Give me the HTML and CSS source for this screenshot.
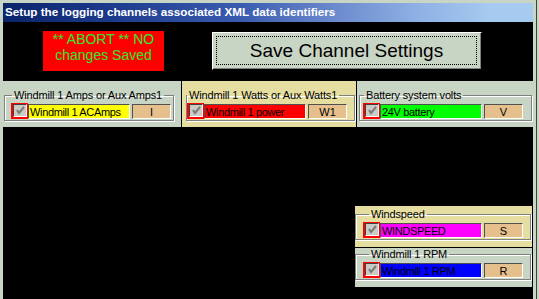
FILE: index.html
```html
<!DOCTYPE html>
<html>

<head>
<link rel="stylesheet" href="styles.css">
</head>

<body>
    <div class="frame">
        <div class="titlebar">Setup the logging channels associated XML data identifiers</div>
        <div class="client">
            <div class="top-row">
                <div class="abort">** ABORT ** NO<br>changes Saved</div>
                <div class="save-btn"><span class="focus">Save Channel Settings</span></div>
            </div>

            <div class="panel-row">
                <div class="panel p1">
                    <fieldset class="group">
                        <legend>Windmill 1 Amps or Aux Amps1</legend>
                        <div class="channel">
                            <div class="check-wrap"><div class="check"><svg width="11" height="11" viewBox="0 0 11 11"><polyline points="2,5 4,8 9,2" fill="none" stroke="#7a7a7a" stroke-width="2"/></svg></div></div>
                            <div class="name yellow">Windmill 1 ACAmps</div>
                            <div class="ident">I</div>
                        </div>
                    </fieldset>
                </div>
                <div class="panel p2 khaki">
                    <fieldset class="group">
                        <legend>Windmill 1 Watts or Aux Watts1</legend>
                        <div class="channel">
                            <div class="check-wrap"><div class="check"><svg width="11" height="11" viewBox="0 0 11 11"><polyline points="2,5 4,8 9,2" fill="none" stroke="#7a7a7a" stroke-width="2"/></svg></div></div>
                            <div class="name red">Windmill 1 power</div>
                            <div class="ident">W1</div>
                        </div>
                    </fieldset>
                </div>
                <div class="panel p3">
                    <fieldset class="group">
                        <legend>Battery system volts</legend>
                        <div class="channel">
                            <div class="check-wrap"><div class="check"><svg width="11" height="11" viewBox="0 0 11 11"><polyline points="2,5 4,8 9,2" fill="none" stroke="#7a7a7a" stroke-width="2"/></svg></div></div>
                            <div class="name green">24V battery</div>
                            <div class="ident">V</div>
                        </div>
                    </fieldset>
                </div>
            </div>

            <div class="side-stack">
                <div class="panel small khaki">
                    <fieldset class="group">
                        <legend>Windspeed</legend>
                        <div class="channel">
                            <div class="check-wrap"><div class="check"><svg width="11" height="11" viewBox="0 0 11 11"><polyline points="2,5 4,8 9,2" fill="none" stroke="#7a7a7a" stroke-width="2"/></svg></div></div>
                            <div class="name magenta">WINDSPEED</div>
                            <div class="ident">S</div>
                        </div>
                    </fieldset>
                </div>
                <div class="panel small">
                    <fieldset class="group">
                        <legend>Windmill 1 RPM</legend>
                        <div class="channel">
                            <div class="check-wrap"><div class="check"><svg width="11" height="11" viewBox="0 0 11 11"><polyline points="2,5 4,8 9,2" fill="none" stroke="#7a7a7a" stroke-width="2"/></svg></div></div>
                            <div class="name blue">Windmill 1 RPM</div>
                            <div class="ident">R</div>
                        </div>
                    </fieldset>
                </div>
            </div>
        </div>
    </div>
</body>

</html>
```

FILE: styles.css
```css
body {
    margin: 0;
    background-color: #c8d4c4;
    font-family: "Liberation Sans", Arial, sans-serif;
    font-size: 11px;
    color: #000;
}

.frame {
    width: 533px;
    height: 299px;
    padding: 3px 0 0 3px;
    box-sizing: border-box;
    box-shadow: 3px 0 0 #c8d4c4, 4px 0 0 #3c463c;
    overflow: hidden;
}

.titlebar {
    height: 19px;
    line-height: 18px;
    padding-left: 2px;
    color: #fff;
    font-weight: bold;
    font-size: 11.7px;
    white-space: nowrap;
    background: linear-gradient(to right, #0a246a 0%, #1c3a8c 20%, #3a5cb0 45%, #6a88cc 62%, #8eb0e4 78%, #a6caf0 92%);
}

.client {
    background-color: #000;
    height: 277px;
}

.top-row {
    display: flex;
    align-items: flex-start;
    padding-top: 9px;
    height: 50px;
}

.abort {
    margin-left: 40px;
    width: 121px;
    height: 40px;
    background-color: #ff0000;
    color: #2ee82e;
    font-size: 14px;
    line-height: 16px;
    text-align: center;
}

.save-btn {
    margin-left: 48px;
    margin-top: 1px;
    width: 270px;
    height: 38px;
    box-sizing: border-box;
    background-color: #c8d4c4;
    border: 1px solid;
    border-color: #fff #000 #000 #fff;
    box-shadow: inset -1px -1px 0 #808080;
    padding: 3px 4px 4px 3px;
    display: flex;
}

.save-btn .focus {
    flex: 1;
    border: 1px dotted #000;
    display: flex;
    align-items: center;
    justify-content: center;
    font-size: 19px;
}

.panel-row {
    display: flex;
    gap: 1px;
}

.panel {
    background-color: #c8d4c4;
    height: 46px;
    box-sizing: border-box;
    padding-top: 8px;
}

.khaki {
    background-color: #e6dea0;
}

.p1 { width: 178px; }
.p2 { width: 174px; }
.p3 { width: 176px; }

.group {
    margin: 0;
    padding: 1px 0 1px 0;
    border: 1px solid #808080;
    box-shadow: 1px 1px 0 #fff, inset 1px 1px 0 #fff;
    box-sizing: border-box;
    min-width: 0;
}

.group legend {
    padding: 0 2px;
    line-height: 13px;
    white-space: nowrap;
    letter-spacing: -0.15px;
}

.p1 .group { margin-left: 1px; width: 170px; padding-left: 6px; }
.p1 .group legend { margin-left: 1px; }
.p2 .group { margin-left: 4px; width: 169px; padding-left: 0; }
.p2 .group legend { margin-left: 0; }
.p3 .group { margin-left: 2px; width: 173px; padding-left: 3px; }
.p3 .group legend { margin-left: 1px; }

.channel {
    display: flex;
    align-items: center;
    gap: 2px;
    height: 16px;
}

.check-wrap {
    width: 17px;
    height: 16px;
    box-sizing: border-box;
    padding: 1px 1px 2px 2px;
    background-color: #ff0000;
    margin-right: -2px;
}

.check {
    width: 14px;
    height: 13px;
    box-sizing: border-box;
    background-color: #c8ccc4;
    border-top: 1px solid #404040;
    border-left: 1px solid #404040;
    border-right: 1px solid #fff;
    border-bottom: 1px solid #fff;
    display: flex;
    align-items: center;
    justify-content: center;
}

.name,
.ident {
    height: 15px;
    line-height: 14px;
    box-sizing: border-box;
    border-top: 1px solid #505050;
    border-left: 1px solid #505050;
    border-right: 1px solid #fff;
    border-bottom: 1px solid #fff;
    white-space: nowrap;
    overflow: hidden;
}

.name {
    width: 102px;
    padding-left: 1px;
    letter-spacing: -0.35px;
}

.ident {
    width: 39px;
    text-align: center;
    background-color: #e6c08c;
}

.yellow { background-color: #ffff00; }
.red { background-color: #ff0000; }
.green { background-color: #00ff00; }
.magenta { background-color: #ff00ff; }
.blue { background-color: #0000ff; }

.side-stack {
    margin-top: 79px;
    margin-left: 352px;
    width: 177px;
    display: flex;
    flex-direction: column;
    gap: 1px;
}

.panel.small {
    height: 41px;
    padding-top: 2px;
}

.panel.small + .panel.small {
    height: 39px;
    padding-top: 0;
}

.small .group {
    margin-left: 0;
    width: 176px;
    padding-left: 7px;
}

.small .group legend {
    margin-left: 6px;
}
```
